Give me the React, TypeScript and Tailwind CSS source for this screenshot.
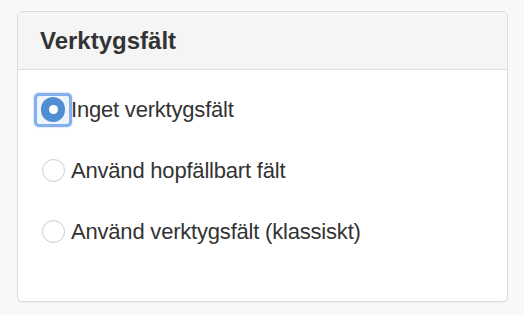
import { useState } from "react";

const options = [
  { id: "none", label: "Inget verktygsfält" },
  { id: "collapsible", label: "Använd hopfällbart fält" },
  { id: "classic", label: "Använd verktygsfält (klassiskt)" },
];

export default function App() {
  const [selected, setSelected] = useState("none");

  return (
    <div className="min-h-[315px] w-[524px] bg-[#f8f8f8] pl-[17px] pt-[11px] font-['Liberation_Sans',Arial,sans-serif]">
      <div className="flex h-[291px] w-[491px] flex-col overflow-hidden rounded-[5px] border border-[#dcdcdc] bg-white shadow-[0_1px_1px_rgba(0,0,0,0.05)]">
        <div className="flex h-[58px] shrink-0 items-center border-b border-[#dddddd] bg-[#f5f5f5] pl-[22px]">
          <h2 className="text-[24px] font-bold leading-none text-[#333333]">Verktygsfält</h2>
        </div>
        <div className="flex flex-col pt-[9px]">
          {options.map((opt) => (
            <RadioRow
              key={opt.id}
              label={opt.label}
              checked={selected === opt.id}
              onSelect={() => setSelected(opt.id)}
            />
          ))}
        </div>
      </div>
    </div>
  );
}

function RadioRow({ label, checked, onSelect }: { label: string; checked: boolean; onSelect: () => void }) {
  return (
    <label className="flex h-[61px] cursor-pointer items-center pl-[23px]" onClick={onSelect}>
      <span className="relative flex h-[24px] w-[24px] items-center justify-center">
        {checked && (
          <span className="absolute -inset-x-[7px] -inset-y-[5px] rounded-[5px] border-[3px] border-[#86b0ec] bg-[#eef4fc] shadow-[0_0_2px_rgba(90,140,230,0.6)]" />
        )}
        <span
          className={
            checked
              ? "relative flex h-[25px] w-[25px] items-center justify-center rounded-full bg-[#4f8ed0]"
              : "relative h-[23px] w-[23px] rounded-full border border-[#cccccc] bg-white"
          }
        >
          {checked && <span className="h-[9px] w-[9px] rounded-full bg-white" />}
        </span>
      </span>
      <span className="ml-[6px] text-[22px] leading-none tracking-[-0.2px] text-[#333333]">{label}</span>
    </label>
  );
}
